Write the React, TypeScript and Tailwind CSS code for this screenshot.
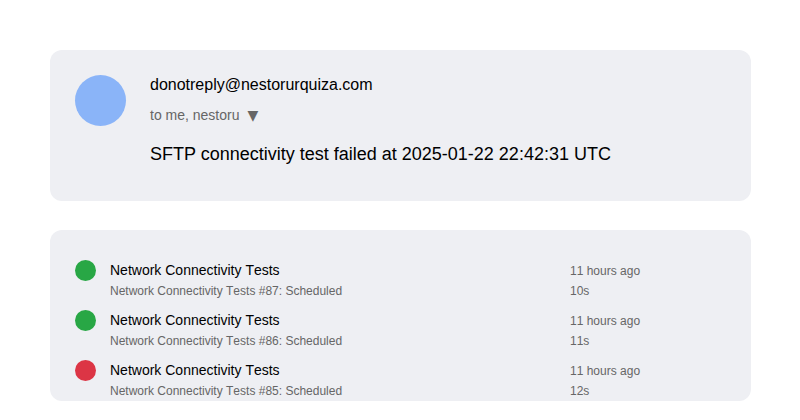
const runs = [
  { id: 87, ok: true, duration: "10s" },
  { id: 86, ok: true, duration: "11s" },
  { id: 85, ok: false, duration: "12s" },
];

function EmailCard() {
  return (
    <article className="flex gap-6 rounded-xl bg-[#eeeff3] px-[25px] pt-[25px] pb-[33px]">
      <div className="size-[51px] shrink-0 rounded-full bg-[#8ab4f8]" />
      <div className="min-w-0 flex-1">
        <p className="text-base leading-5">donotreply@nestorurquiza.com</p>
        <p className="mt-[10px] flex gap-2 text-sm leading-5 text-[#666666]">
          <span>to me, nestoru</span>
          <span className="font-['DejaVu_Sans',sans-serif]">▼</span>
        </p>
        <h1 className="mt-[15px] text-lg leading-7">
          SFTP connectivity test failed at 2025-01-22 22:42:31 UTC
        </h1>
      </div>
    </article>
  );
}

function RunList() {
  return (
    <ul className="flex flex-col gap-[9px] rounded-xl bg-[#eeeff3] px-[25px] pt-[30px] [font-kerning:none]">
      {runs.map((run) => (
        <li key={run.id} className="flex">
          <span
            className={`mr-[14px] size-[21px] shrink-0 rounded-full ${run.ok ? "bg-[#28a745]" : "bg-[#dc3545]"}`}
          />
          <div className="min-w-0 flex-1">
            <p className="text-sm leading-5">Network Connectivity Tests</p>
            <p className="mt-px text-xs leading-5 text-[#666666]">
              {`Network Connectivity Tests #${run.id}: Scheduled`}
            </p>
          </div>
          <div className="w-[156px] pt-px text-xs leading-5 text-[#666666]">
            <p>11 hours ago</p>
            <p>{run.duration}</p>
          </div>
        </li>
      ))}
    </ul>
  );
}

export default function App() {
  return (
    <main className="flex flex-col gap-[29px] bg-white pt-[50px] pr-[49px] pl-[50px] font-['Liberation_Sans',Arial,sans-serif] text-black">
      <EmailCard />
      <RunList />
    </main>
  );
}
